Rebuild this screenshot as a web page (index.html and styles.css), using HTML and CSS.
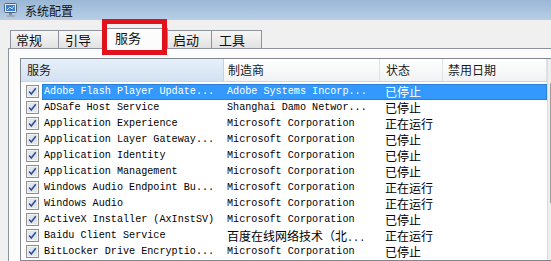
FILE: index.html
```html
<!DOCTYPE html>
<html lang="zh-CN">
<head>
    <meta charset="UTF-8">
    <title>系统配置</title>
    <link rel="stylesheet" href="styles.css">
</head>
<body>
<div class="window">
    <div class="titlebar">
        <svg class="app-icon" width="16" height="16" viewBox="0 0 16 16">
            <rect x="1.5" y="1.5" width="12" height="9" rx="1" fill="#dfe7f2" stroke="#56657c"/>
            <rect x="3" y="3" width="9" height="6" fill="#3f7fd0"/>
            <path d="M4 8 L7 5 L9 7 L11 4" stroke="#bfe0ff" stroke-width="1" fill="none"/>
            <rect x="6" y="11" width="3" height="2" fill="#7a8494"/>
            <rect x="3.5" y="13" width="9" height="2" rx="1" fill="#a3abb8"/>
        </svg>
        <span class="title">系统配置</span>
    </div>
    <div class="tabbar">
        <div class="tab tab-general">常规</div>
        <div class="tab tab-boot">引导</div>
        <div class="tab tab-services active">服务</div>
        <div class="tab tab-startup">启动</div>
        <div class="tab tab-tools">工具</div>
    </div>
    <div class="highlight"></div>
    <div class="panel">
        <div class="list">
            <div class="list-main">
                <div class="header">
                    <div class="hcol hcol-service sorted">服务</div>
                    <div class="hcol hcol-maker">制造商</div>
                    <div class="hcol hcol-status">状态</div>
                    <div class="hcol hcol-date">禁用日期</div>
                </div>
                <div id="rows"></div>
            </div>
            <div class="scrollbar"><div class="thumb"></div></div>
        </div>
    </div>
</div>
<script>
    const services = [
        ['Adobe Flash Player Update...', 'Adobe Systems Incorp...', '已停止', true],
        ['ADSafe Host Service', 'Shanghai Damo Networ...', '已停止'],
        ['Application Experience', 'Microsoft Corporation', '正在运行'],
        ['Application Layer Gateway...', 'Microsoft Corporation', '已停止'],
        ['Application Identity', 'Microsoft Corporation', '已停止'],
        ['Application Management', 'Microsoft Corporation', '已停止'],
        ['Windows Audio Endpoint Bu...', 'Microsoft Corporation', '正在运行'],
        ['Windows Audio', 'Microsoft Corporation', '正在运行'],
        ['ActiveX Installer (AxInstSV)', 'Microsoft Corporation', '已停止'],
        ['Baidu Client Service', '<span class="cjk">百度在线网络技术（北</span>...', '正在运行'],
        ['BitLocker Drive Encryptio...', 'Microsoft Corporation', '已停止']
    ];

    const check = '<svg width="13" height="13" viewBox="0 0 13 13"><rect x="0.5" y="0.5" width="12" height="12" fill="#f4f4f4" stroke="#8e8f8f"/><rect x="2" y="2" width="9" height="9" fill="#e2e5ea"/><path d="M3.2 6.5 L5.3 9 L9.8 3.2" stroke="#2c4f9e" stroke-width="1.6" fill="none"/></svg>';

    let html = '';
    services.forEach(function(s) {
        html += '<div class="row' + (s[3] ? ' selected' : '') + '">' +
            '<div class="chk">' + check + '</div>' +
            '<div class="cells">' +
            '<div class="cell c-service">' + s[0] + '</div>' +
            '<div class="cell c-maker">' + s[1] + '</div>' +
            '<div class="cell c-status">' + s[2] + '</div>' +
            '<div class="cell c-date"></div>' +
            '</div></div>';
    });
    document.getElementById('rows').innerHTML = html;
</script>
</body>
</html>
```

FILE: styles.css
```css
body { margin: 0; background: #f0f0f0; font-family: 'Noto Sans CJK SC', sans-serif; overflow: hidden; }
.window { width: 551px; height: 261px; position: relative; overflow: hidden; }

.titlebar {
    height: 20px;
    display: flex;
    align-items: center;
    padding-left: 3px;
    background: linear-gradient(#9ab7d6, #b7cfe7);
    border-bottom: 2px solid #f4eded;
}
.app-icon { margin-right: 6px; }
.title { font-size: 12px; color: #111; }

.tabbar {
    height: 26px;
    display: flex;
    align-items: flex-end;
    padding-left: 10px;
}
.tab {
    height: 17px;
    border: 1px solid #8d929b;
    border-bottom: none;
    border-right: none;
    background: linear-gradient(#f6f6f6, #e2e2e2);
    font-size: 13px;
    line-height: 17px;
    padding-left: 5px;
    color: #111;
    box-sizing: content-box;
}
.tab-general { width: 42px; }
.tab-boot { width: 38px; padding-left: 6px; }
.tab-services { width: 52px; }
.tab-startup { width: 38px; }
.tab-tools { width: 42px; padding-left: 7px; border-right: 1px solid #8d929b; }
.tab.active {
    height: 20px;
    background: #fcfcfc;
    border-right: 1px solid #8d929b;
    padding-left: 11px;
    position: relative;
    z-index: 1;
    margin-bottom: -1px;
}
.tab.active + .tab { border-left: none; }

.highlight {
    position: absolute;
    left: 102px;
    top: 19px;
    width: 55px;
    height: 26px;
    border: 5px solid #e2121c;
    z-index: 2;
}

.panel {
    margin-left: 8px;
    border-top: 1px solid #8d929b;
    border-left: 1px solid #8d929b;
    background: #fcfcfc;
    padding: 9px 0 0 11px;
    height: 300px;
}

.list {
    display: flex;
    width: 560px;
    border: 1px solid #82878f;
    border-right: none;
    background: #fff;
}
.list-main { width: 526px; }
.scrollbar {
    width: 17px;
    background: #eeeeee;
    border-left: 1px solid #dcdcdc;
    padding-top: 22px;
}
.thumb {
    margin: 1px 2px;
    height: 120px;
    border: 1px solid #9c9c9c;
    border-radius: 2px;
    background: linear-gradient(90deg, #f2f2f2, #d6d6d6);
}

.header {
    display: flex;
    height: 22px;
    background: linear-gradient(#ffffff, #f1f2f4);
    border-bottom: 1px solid #d5d5d5;
    font-size: 12px;
    line-height: 22px;
    color: #1a1a1a;
}
.hcol { border-right: 1px solid #dfe2e7; padding-left: 6px; box-sizing: border-box; }
.hcol.sorted { background: linear-gradient(#e6f0fa, #d3e2f2); border-right-color: #c5d3e2; }
.hcol-service { width: 203px; }
.hcol-maker { width: 156px; padding-left: 4px; }
.hcol-status { width: 63px; }
.hcol-date { width: 104px; padding-left: 5px; }

#rows { padding-top: 2px; }
.row { display: flex; height: 16px; }
.chk { width: 21px; padding: 1px 0 0 5px; box-sizing: border-box; }
.chk svg { display: block; }
.cells {
    display: flex;
    width: 505px;
    font-family: 'Liberation Mono', 'Noto Sans CJK SC', monospace;
    font-size: 10.15px;
    line-height: 16px;
    color: #000;
    white-space: nowrap;
}
.cell { overflow: hidden; box-sizing: border-box; }
.c-service { width: 182px; padding-left: 2px; }
.c-maker { width: 156px; padding-left: 3px; }
.c-status { width: 63px; padding-left: 5px; font-family: 'Noto Sans CJK SC', sans-serif; font-size: 12px; }
.c-date { flex: 1; }
.cjk { font-family: 'Noto Sans CJK SC', sans-serif; font-size: 12px; }
.row.selected .cells { background: #3399ff; color: #fff; box-shadow: inset 0 0 0 1px #2b7fd8; }
```
